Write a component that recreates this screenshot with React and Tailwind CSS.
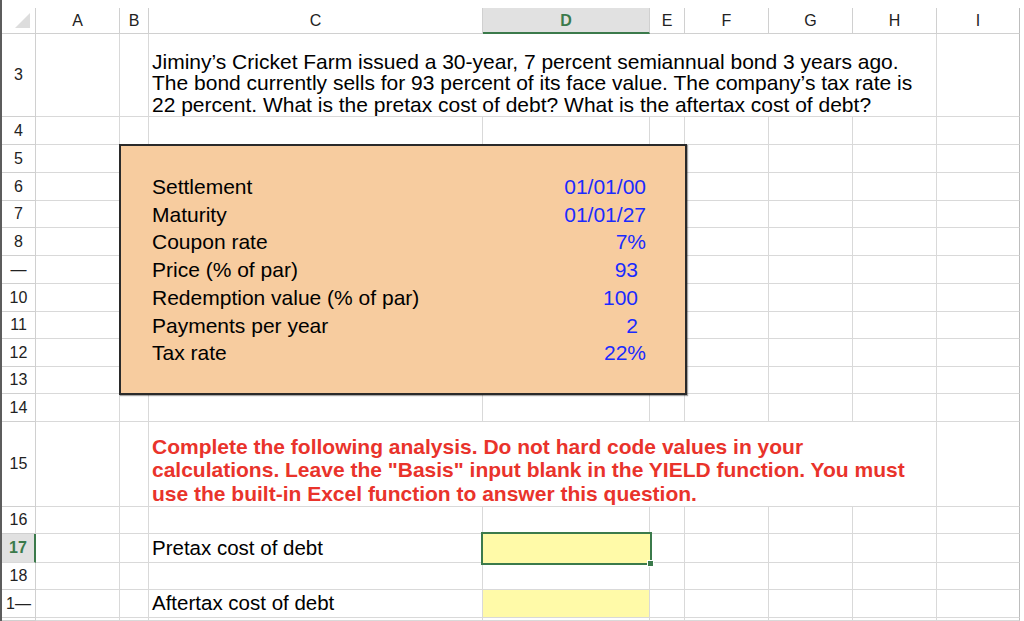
import React from 'react';

const COL_START = ['', 'col-start-1', 'col-start-2', 'col-start-3', 'col-start-4', 'col-start-5', 'col-start-6', 'col-start-7', 'col-start-8', 'col-start-9', 'col-start-10', 'col-start-11', 'col-start-12'];
const ROW_START = ['', 'row-start-1', 'row-start-2', 'row-start-3', 'row-start-4', 'row-start-5', 'row-start-6', 'row-start-7', 'row-start-8', 'row-start-9', 'row-start-10', 'row-start-11', 'row-start-12', 'row-start-13', 'row-start-14', 'row-start-15', 'row-start-16', 'row-start-17', 'row-start-18', 'row-start-19', 'row-start-20'];

const LETTERS = { 3: 'A', 4: 'B', 5: 'C', 6: 'D', 7: 'E', 8: 'F', 9: 'G', 10: 'H', 11: 'I' };
const ROW_LABELS = { 3: '3', 4: '4', 5: '5', 6: '6', 7: '7', 8: '8', 9: '—', 10: '10', 11: '11', 12: '12', 13: '13', 14: '14', 15: '15', 16: '16', 17: '17', 18: '18', 19: '1—', 20: '' };

const BOX_ROWS = [
  { r: 6, label: 'Settlement', value: '01/01/00', num: false },
  { r: 7, label: 'Maturity', value: '01/01/27', num: false },
  { r: 8, label: 'Coupon rate', value: '7%', num: false },
  { r: 9, label: 'Price (% of par)', value: '93', num: true },
  { r: 10, label: 'Redemption value (% of par)', value: '100', num: true },
  { r: 11, label: 'Payments per year', value: '2', num: true },
  { r: 12, label: 'Tax rate', value: '22%', num: false },
];

const HDR_FONT = "font-['Liberation_Sans',Arial,sans-serif]";

export default function App() {
  const cells = [];

  // header row cells
  for (let c = 2; c <= 12; c++) {
    const pos = `${COL_START[c]} row-start-2`;
    if (c === 2) {
      cells.push(
        <div key={`h${c}`} className={`${pos} flex items-end justify-end border-r border-b border-[#d0d0d0] pb-[5px] pr-[5px]`}>
          <svg width="15" height="15" viewBox="0 0 15 15">
            <path d="M15 0 L15 15 L0 15 Z" fill="#dddddd" />
          </svg>
        </div>
      );
    } else if (c === 12) {
      cells.push(<div key={`h${c}`} className={`${pos}`} />);
    } else if (c === 6) {
      cells.push(
        <div key={`h${c}`} className={`${pos} flex items-center justify-center border-r border-[#d0d0d0] border-b-2 border-b-[#3b7a4b] bg-[#e1e1e1] pt-[2px] text-[16px] font-bold text-[#3b7a4b] ${HDR_FONT}`}>
          {LETTERS[c]}
        </div>
      );
    } else {
      cells.push(
        <div key={`h${c}`} className={`${pos} flex items-center justify-center border-r border-b border-[#d0d0d0] pt-[1px] text-[16px] text-[#222] ${HDR_FONT} ${c === 11 ? 'border-r-[#bdbdbd]' : ''}`}>
          {LETTERS[c]}
        </div>
      );
    }
  }

  // body cells
  for (let r = 3; r <= 20; r++) {
    for (let c = 2; c <= 12; c++) {
      const merged = r === 3 || r === 15;
      if (merged && c >= 6 && c <= 10) continue;
      const pos = `${COL_START[c]} ${ROW_START[r]}`;
      const key = `${r}-${c}`;
      if (c === 2) {
        if (r === 17) {
          cells.push(
            <div key={key} className={`${pos} flex items-center justify-center border-b border-[#d9d9d9] border-r-2 border-r-[#3b7a4b] bg-[#e1e1e1] text-[16px] font-bold text-[#3b7a4b] ${HDR_FONT}`}>
              {ROW_LABELS[r]}
            </div>
          );
        } else {
          cells.push(
            <div key={key} className={`${pos} flex items-center justify-center border-r border-b border-[#d0d0d0] text-[16px] text-[#222] ${HDR_FONT}`}>
              {ROW_LABELS[r]}
            </div>
          );
        }
        continue;
      }
      if (c === 12) {
        cells.push(<div key={key} className={`${pos}`} />);
        continue;
      }
      if (merged && c === 5) {
        if (r === 3) {
          cells.push(
            <div key={key} className={`${pos} col-span-6 flex items-end border-r border-b border-[#d9d9d9] pb-[1px] pl-[3px] text-[21px] leading-[21.5px] text-black whitespace-nowrap`}>
              <div>
                <div>Jiminy’s Cricket Farm issued a 30-year, 7 percent semiannual bond 3 years ago.</div>
                <div>The bond currently sells for 93 percent of its face value. The company’s tax rate is</div>
                <div>22 percent. What is the pretax cost of debt? What is the aftertax cost of debt?</div>
              </div>
            </div>
          );
        } else {
          cells.push(
            <div key={key} className={`${pos} col-span-6 flex items-end border-r border-b border-[#d9d9d9] pb-[1px] pl-[3px] text-[21px] font-bold leading-[23.5px] text-[#e9332b] whitespace-nowrap`}>
              <div>
                <div>Complete the following analysis. Do not hard code values in your</div>
                <div>calculations. Leave the "Basis" input blank in the YIELD function. You must</div>
                <div>use the built-in Excel function to answer this question.</div>
              </div>
            </div>
          );
        }
        continue;
      }
      if (r === 17 && c === 6) {
        cells.push(
          <div key={key} className={`${pos} relative z-10 bg-[#fffaa8] outline-2 outline-[#3b7a4b]`}>
            <div className="absolute -right-[4px] -bottom-[4px] h-[7px] w-[7px] border border-white bg-[#3b7a4b]" />
          </div>
        );
        continue;
      }
      const yellow = r === 19 && c === 6 ? 'bg-[#fffaa8]' : '';
      const rightEdge = c === 11 ? 'border-r-[#bdbdbd]' : '';
      let content = null;
      if (c === 5 && r === 17) content = 'Pretax cost of debt';
      if (c === 5 && r === 19) content = 'Aftertax cost of debt';
      cells.push(
        <div key={key} className={`${pos} flex items-center border-r border-b border-[#d9d9d9] pl-[3px] text-[20.5px] text-black whitespace-nowrap ${yellow} ${rightEdge}`}>
          {content}
        </div>
      );
    }
  }

  return (
    <div className="h-[621px] w-[1024px] overflow-hidden bg-white font-['Liberation_Sans',Arial,sans-serif]">
      <div className="grid h-[621px] grid-cols-[2px_34px_84px_29px_334px_167px_35px_84px_84px_84px_83px_1fr] grid-rows-[8px_26px_83px_28px_28px_28px_27px_28px_28px_28px_27px_28px_27px_28px_85px_27px_29px_27px_28px_1fr]">
        <div className="col-start-1 row-start-1 row-end-[-1] bg-[#5c5c5c]" />
        {cells}
        {/* Orange input box over B5:E13 */}
        <div className="col-start-4 col-end-8 row-start-5 row-end-14 -mt-px -ml-px -mr-[2px] -mb-px border-2 border-[#2a2a2a] bg-[#f7cc9f] shadow-[1px_1px_1px_rgba(0,0,0,0.35)]" />
        {BOX_ROWS.map((b) => (
          <React.Fragment key={b.r}>
            <div className={`col-start-5 ${ROW_START[b.r]} flex items-center pl-[3px] text-[21px] text-black whitespace-nowrap`}>
              {b.label}
            </div>
            <div className={`col-start-6 ${ROW_START[b.r]} flex items-center justify-end text-[21px] text-[#1a2bff] whitespace-nowrap ${b.num ? 'pr-[12px]' : 'pr-[4px]'}`}>
              {b.value}
            </div>
          </React.Fragment>
        ))}
      </div>
    </div>
  );
}
